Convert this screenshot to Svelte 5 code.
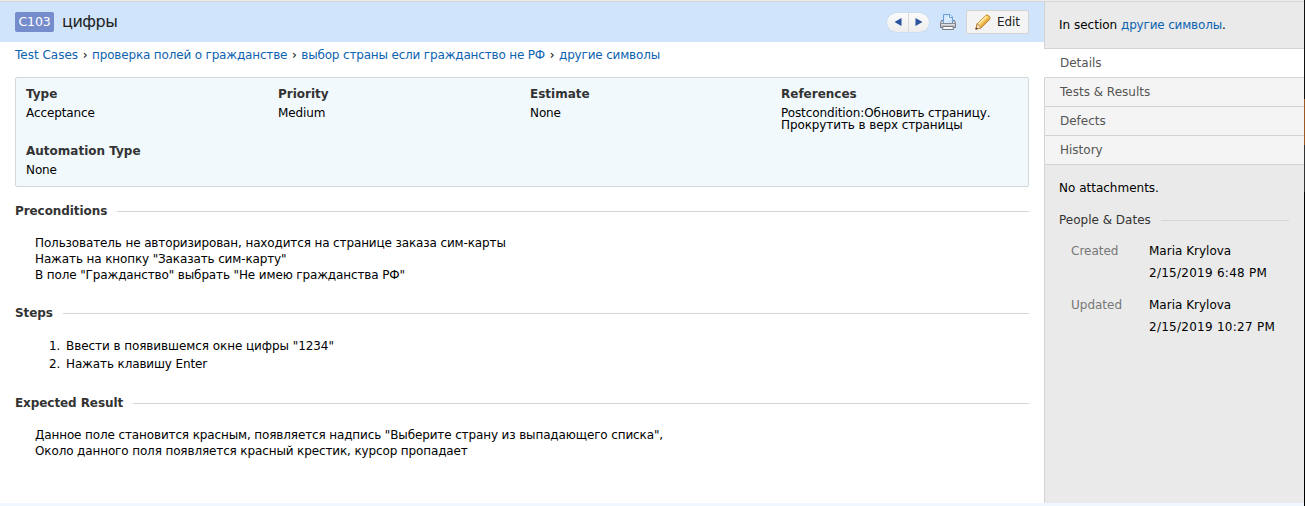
<script>
  const crumbs = ['Test Cases', 'проверка полей о гражданстве', 'выбор страны если гражданство не РФ', 'другие символы'];
  const fields = [
    ['Type', 'Acceptance'],
    ['Priority', 'Medium'],
    ['Estimate', 'None'],
    ['References', 'Postcondition:Обновить страницу.\nПрокрутить в верх страницы'],
    ['Automation Type', 'None']
  ];
  const tabs = ['Details', 'Tests & Results', 'Defects', 'History'];
  const people = [
    ['Created', 'Maria Krylova', '2/15/2019 6:48 PM'],
    ['Updated', 'Maria Krylova', '2/15/2019 10:27 PM']
  ];
</script>

<div class="page">
  <div class="columns">
    <main>
      <header>
        <span class="badge">C103</span>
        <h1>цифры</h1>
        <div class="pager">
          <button aria-label="Previous"><svg width="8" height="8" viewBox="0 0 8 8"><path d="M7.5 0v8L.5 4z" fill="#29539b" /></svg></button>
          <button aria-label="Next"><svg width="8" height="8" viewBox="0 0 8 8"><path d="M.5 0v8l7-4z" fill="#29539b" /></svg></button>
        </div>
        <svg class="printer" width="16" height="16" viewBox="0 0 16 16">
          <defs>
            <linearGradient id="metal" x2="0" y2="1">
              <stop offset="0" stop-color="#b4b6bc" />
              <stop offset=".4" stop-color="#f4f4f5" />
              <stop offset="1" stop-color="#9b9da4" />
            </linearGradient>
          </defs>
          <path d="M1.500 6.500h13l1 3v4H.5v-4z" fill="url(#metal)" stroke="#777a83" stroke-linejoin="round" />
          <path d="M3.500 9.500v-9h6.500l2.500 2.500v6.500z" fill="#cfe6fd" stroke="#6b9fd8" />
          <path d="M4.500 5.500l6-4M4.500 8l7-4.500" stroke="#edf7ff" />
          <path d="M9.500 1v2.500h2.500" fill="#fff" stroke="#6b9fd8" />
          <path d="M1 9.500h14" stroke="#868991" />
          <path d="M3 12.500h10l.5 3h-11z" fill="#fafafa" stroke="#787b84" />
        </svg>
        <button class="edit">
          <svg width="16" height="16" viewBox="0 0 16 16">
            <path d="M.8 15.200l1.400-5.500L10.500 1.600q1.700-1.400 3.500.4t.6 3.500L6.300 13.800z" fill="#f6c65c" stroke="#bd8230" />
            <path d="M3.500 10.200l8-8" stroke="#ffe9a3" stroke-width="1.800" />
            <path d="M5.900 12.700l8-8" stroke="#dfa140" stroke-width="1.200" />
            <path d="M.8 15.200l1.400-5.500 4.100 4.100z" fill="#f8e4c4" stroke="#a8702a" stroke-width=".7" />
            <path d="M.6 15.400l.6-2.200 1.600 1.600z" fill="#4b3521" />
          </svg>
          <span>Edit</span>
        </button>
      </header>

      <nav class="crumbs">
        {#each crumbs as c, i}
          {#if i}<i>›</i>{/if}<a class="c{i}" href="#top">{c}</a>
        {/each}
      </nav>

      <dl class="fields">
        {#each fields as [k, v]}
          <div><dt>{k}</dt><dd>{v}</dd></div>
        {/each}
      </dl>

      <h2 class="h-pre"><span>Preconditions</span></h2>
      <p>Пользователь не авторизирован, находится на странице заказа сим-карты<br />Нажать на кнопку "Заказать сим-карту"<br />В поле "Гражданство" выбрать "Не имею гражданства РФ"</p>

      <h2 class="h-steps"><span>Steps</span></h2>
      <ol>
        <li><span>1.</span>Ввести в появившемся окне цифры "1234"</li>
        <li><span>2.</span>Нажать клавишу Enter</li>
      </ol>

      <h2 class="h-exp"><span>Expected Result</span></h2>
      <p>Данное поле становится красным, появляется надпись "Выберите страну из выпадающего списка",<br />Около данного поля появляется красный крестик, курсор пропадает</p>
    </main>

    <aside>
      <div class="section">In section <a href="#top">другие символы</a>.</div>
      <ul>
        {#each tabs as t, i}
          <li class:active={i === 0}>{t}</li>
        {/each}
      </ul>
      <div class="info">
        <div class="none">No attachments.</div>
        <h3>People &amp; Dates</h3>
        {#each people as [k, name, date]}
          <div class="person"><span class="key">{k}</span><div>{name}<br /><span class="date">{date}</span></div></div>
        {/each}
      </div>
    </aside>
  </div>
  <div class="edge"></div>
</div>

<style>
  :global(body) { margin: 0; background: #f0f7fe; }
  .page {
    display: flex;
    height: 506px;
    overflow: hidden;
    font: 12px/16px "DejaVu Sans", sans-serif;
    letter-spacing: -0.13px;
    color: #000;
    white-space: nowrap;
  }
  .columns {
    flex: 1;
    display: flex;
    height: 501px;
    border-top: 1px solid #d5d5d5;
    margin-top: 1px;
    box-shadow: 0 -1px #ececec;
    background: #fff;
  }
  .edge { width: 1px; background: linear-gradient(#111 99px, #9b5a25 99px 145px, #333 145px 192px, #000 192px); }
  a { color: #0d63b0; text-decoration: none; }
  main { width: 1044px; }
  header { display: flex; align-items: center; height: 40px; padding: 0 15px; background: #d0e4fc; }
  .badge {
    width: 39px; height: 20px; border-radius: 2px; background: #758ccd; color: #fff;
    font-size: 12.5px; line-height: 20px; letter-spacing: -0.1px; text-align: center;
  }
  h1 { flex: 1; margin: 0 0 0 8px; font-size: 16px; line-height: 22px; font-weight: 400; letter-spacing: -0.5px; color: #222; }
  button { font: inherit; letter-spacing: inherit; padding: 0; border: 0; }
  .pager { display: flex; margin-right: 11px; border-radius: 10px; box-shadow: 0 0 1px #aaa; overflow: hidden; }
  .pager button { width: 21px; height: 19px; display: grid; place-items: center; background: linear-gradient(#fbfbfb, #eee); }
  .pager button + button { border-left: 1px solid #d9d9d9; }
  .printer { margin-right: 10px; }
  .edit {
    box-sizing: border-box; width: 63px; height: 24px; display: flex; align-items: center; gap: 6px;
    padding-left: 8px; border: 1px solid #d3d3d3; border-radius: 2px; background: #f4f4f4; color: #222;
  }
  .crumbs { display: flex; height: 16px; padding: 5px 15px 0; }
  .crumbs i { font-style: normal; width: 14px; text-align: center; }
  .crumbs a { letter-spacing: -0.17px; }
  .crumbs .c0 { letter-spacing: 0; }
  .fields {
    box-sizing: border-box; width: 1014px; height: 110px; margin: 14px 15px 0; padding: 8px 10px;
    display: grid; grid-template-columns: 252px 252px 251px 1fr; grid-template-rows: 57px 1fr;
    border: 1px solid #d3d7d9; border-radius: 2px; background: #f1f9fd;
  }
  dt { font-weight: 700; letter-spacing: 0; color: #333; }
  dd { margin: 5px 0 0; line-height: 12px; letter-spacing: -0.1px; white-space: pre; }
  h2 {
    display: flex; align-items: center; gap: 10px; margin: 0 15px;
    font-size: 12px; line-height: 16px; letter-spacing: -0.08px; color: #333;
  }
  h2::after, h3::after { content: ""; flex: 1; height: 1px; background: #d6d6d6; }
  .h-pre { margin-top: 16px; }
  .h-steps { margin-top: 22px; }
  .h-exp { margin-top: 22px; }
  p { margin: 16px 0 0 35px; }
  ol { list-style: none; margin: 16px 0 0 49px; padding: 0; line-height: 18px; }
  ol li:first-child { letter-spacing: -0.07px; }
  ol span { display: inline-block; width: 17px; }
  aside { box-sizing: border-box; width: 260px; background: #eaeaea; letter-spacing: 0; }
  .section { box-sizing: border-box; height: 46px; padding: 15px 14px 0; border-left: 1px solid #d3d3d3; }
  .section a { letter-spacing: -0.17px; }
  ul { list-style: none; margin: 0; padding: 0; border-top: 1px solid #d3d3d3; }
  ul li {
    box-sizing: border-box; height: 29px; padding: 6px 15px; color: #555;
    background: #f4f4f4; border-left: 1px solid #d3d3d3; border-bottom: 1px solid #d3d3d3;
  }
  ul li.active { background: #fff; border-left-color: #fff; }
  .info { box-sizing: border-box; height: 338px; border-left: 1px solid #d3d3d3; padding: 15px 15px 15px 14px; }
  h3 { display: flex; align-items: center; gap: 10px; margin: 16px 0 12px; font: inherit; color: #333; }
  .person { display: flex; margin-bottom: 10px; padding-left: 12px; line-height: 22px; }
  .date { letter-spacing: 0.26px; }
  .key { width: 78px; color: #777; }
</style>
